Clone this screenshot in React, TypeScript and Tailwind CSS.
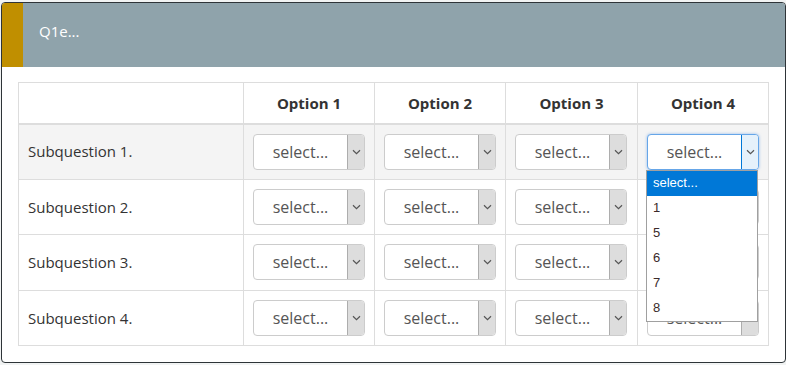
import React from 'react';

const options = ['Option 1', 'Option 2', 'Option 3', 'Option 4'];
const rows = ['Subquestion 1.', 'Subquestion 2.', 'Subquestion 3.', 'Subquestion 4.'];
const listItems = ['select...', '1', '5', '6', '7', '8'];

function Chevron() {
  return (
    <svg width="9" height="6" viewBox="0 0 9 6" fill="none">
      <path d="M1 1.2 L4.5 4.6 L8 1.2" stroke="#555" strokeWidth="1.2" />
    </svg>
  );
}

function Select({ focused }: { focused?: boolean }) {
  return (
    <div
      className={
        'flex h-[36px] w-[112px] rounded-[4px] border bg-white overflow-hidden ' +
        (focused ? 'border-[#66a6e8] shadow-[0_0_3px_rgba(80,150,230,0.6)]' : 'border-[#cccccc]')
      }
    >
      <div className="flex-1 flex items-center justify-center text-[16px] text-[#555]">select...</div>
      <div
        className={
          'w-[17px] flex items-center justify-center border-l ' +
          (focused ? 'bg-[#e5f1fb] border-[#0078d7]' : 'bg-[#dddddd] border-[#adadad]')
        }
      >
        <Chevron />
      </div>
    </div>
  );
}

export default function App() {
  return (
    <div className="w-[786px] h-[365px] bg-[#f1f3f3] pt-[2px] pl-[1px]" style={{ fontFamily: '"Open Sans", sans-serif' }}>
      <div className="h-[361px] rounded-[4px] border border-[#2e3438] bg-white relative">
        <div className="flex h-[64px] bg-[#8fa3ab] rounded-t-[3px] overflow-hidden">
          <div className="w-[21px] bg-[#c08f00]" />
          <div className="pl-[16px] pb-[7px] flex items-center text-white text-[15px]">Q1e...</div>
        </div>
        <div className="pl-[16px] pt-[15px]">
          <table className="table-fixed border-collapse text-[#333]">
            <colgroup>
              <col className="w-[225px]" />
              <col className="w-[131px]" />
              <col className="w-[131px]" />
              <col className="w-[132px]" />
              <col className="w-[131px]" />
            </colgroup>
            <thead>
              <tr className="h-[41px]">
                <th className="border border-b-2 border-[#dddddd]" />
                {options.map(o => (
                  <th key={o} className="border border-b-2 border-[#dddddd] text-[15px] font-bold text-center">{o}</th>
                ))}
              </tr>
            </thead>
            <tbody>
              {rows.map((r, i) => (
                <tr key={r} className={(i === 0 ? 'bg-[#f4f4f4] ' : '') + 'h-[55.5px]'}>
                  <td className="border border-[#dddddd] pl-[9px] text-[15px]">{r}</td>
                  {options.map((o, j) => (
                    <td key={o} className="border border-[#dddddd] px-[9px] relative">
                      <Select focused={i === 0 && j === 3} />
                      {i === 0 && j === 3 && (
                        <div className="absolute left-[8px] top-[45px] w-[112px] border border-[#a0a0a0] bg-white z-10" style={{ fontFamily: '"Liberation Sans", sans-serif' }}>
                          {listItems.map((it, k) => (
                            <div
                              key={it}
                              className={'h-[25px] pl-[6px] flex items-center text-[13px] ' + (k === 0 ? 'bg-[#0078d7] text-white' : 'text-[#3a2a2a]')}
                            >
                              {it}
                            </div>
                          ))}
                        </div>
                      )}
                    </td>
                  ))}
                </tr>
              ))}
            </tbody>
          </table>
        </div>
      </div>
    </div>
  );
}
